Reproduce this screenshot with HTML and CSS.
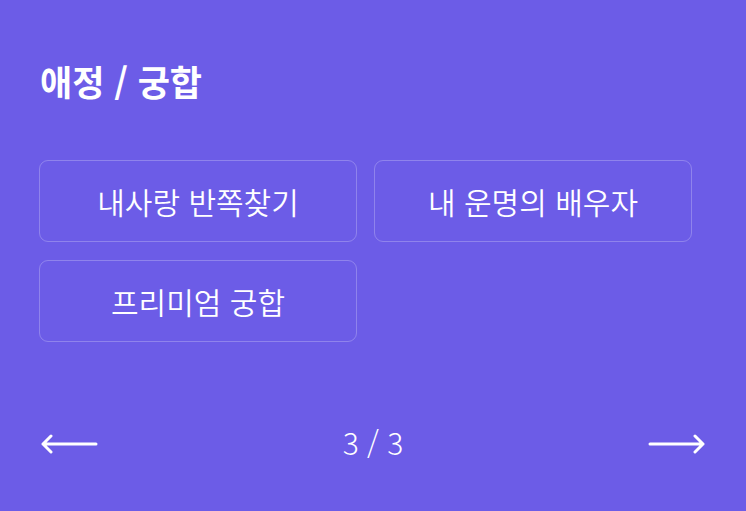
FILE: index.html
```html
<!DOCTYPE html>
<html lang="ko">
<head>
<meta charset="utf-8">
<link rel="stylesheet" href="styles.css">
</head>
<body>
<main class="panel">
  <h1 class="title">애정 / 궁합</h1>
  <div class="grid">
    <button class="item">내사랑 반쪽찾기</button>
    <button class="item">내 운명의 배우자</button>
    <button class="item">프리미엄 궁합</button>
  </div>
  <nav class="pager">
    <span class="arrow">
      <svg width="58" height="20" viewBox="0 0 58 20"><path d="M56 10H3M11 2L3 10L11 18" fill="none" stroke="#fff" stroke-width="3" stroke-linecap="round" stroke-linejoin="round"/></svg>
    </span>
    <span class="count">3 / 3</span>
    <span class="arrow">
      <svg width="58" height="20" viewBox="0 0 58 20"><path d="M2 10H55M47 2L55 10L47 18" fill="none" stroke="#fff" stroke-width="3" stroke-linecap="round" stroke-linejoin="round"/></svg>
    </span>
  </nav>
</main>
</body>
</html>
```
FILE: styles.css
```css
html, body {
  margin: 0;
  padding: 0;
  background: #6c5ce7;
}
body {
  font-family: "Noto Sans CJK KR", "Noto Sans", sans-serif;
  color: #fff;
  width: 746px;
  height: 511px;
  overflow: hidden;
}
.panel {
  padding: 56px 40px 0 40px;
}
.title {
  margin: 0;
  font-size: 35px;
  font-weight: 700;
  line-height: 50px;
}
.grid {
  margin-top: 54px;
  display: grid;
  grid-template-columns: 318px 318px;
  column-gap: 17px;
  row-gap: 18px;
  margin-left: -1px;
}
.item {
  height: 82px;
  box-sizing: border-box;
  border: 1.5px solid rgba(255, 255, 255, 0.24);
  border-radius: 9px;
  background: transparent;
  color: #fff;
  font-family: inherit;
  font-size: 30px;
  font-weight: 350;
  padding: 0;
}
.pager {
  margin-top: 80px;
  display: flex;
  align-items: center;
  justify-content: space-between;
  height: 40px;
}
.arrow {
  display: flex;
  padding-top: 4px;
}
.count {
  font-size: 30px;
  font-weight: 300;
}
```
